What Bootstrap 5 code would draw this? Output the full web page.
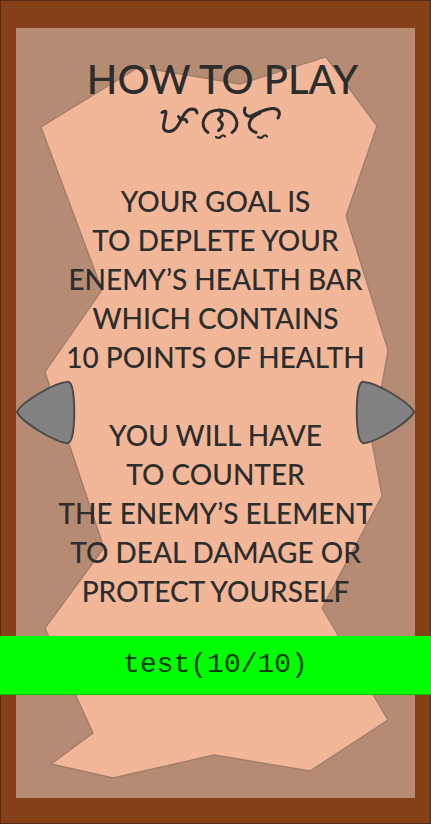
<!DOCTYPE html>
<html lang="en">
<head>
<meta charset="utf-8">
<meta name="viewport" content="width=device-width, initial-scale=1">
<title>How to Play</title>
<link href="https://cdn.jsdelivr.net/npm/bootstrap@5.3.0/dist/css/bootstrap.min.css" rel="stylesheet">
<style>
body { background: #864018; color: #2c2d2d; font-family: Lato, "Open Sans", sans-serif; }
.board { box-shadow: inset 0 0 0 1px #552a0e; padding: 28px 16px 26px; }
.panel { background: #b68b73; }
.parchment { z-index: 0; }
.copy { z-index: 1; padding: 25px 0 24px; }
.title { font-size: 40px; line-height: 52px; font-weight: 500; padding-left: 14px; }
.script-mark { width: 124px; height: 36px; margin-left: 8px; }
.rules { font-size: 28px; line-height: 39px; font-weight: 500; margin-top: 41px; }
.rules p { margin-bottom: 39px; }
.turn { z-index: 2; width: 60px; height: 66px; }
.health { z-index: 3; top: 636px; height: 59px; background: #0f0; border-bottom: 1px solid #00c400; color: #053d05; font-family: "Liberation Mono", monospace; font-size: 28px; line-height: 58px; }
</style>
</head>
<body>
<main class="board position-relative min-vh-100 d-flex">
  <section class="panel position-relative flex-grow-1">
    <svg class="parchment position-absolute top-0 start-0 w-100 h-100" viewBox="16 28 399 770" preserveAspectRatio="none" aria-hidden="true">
      <path d="M41 127 139 67 240 84 326 57 377 126 346 216 388 350 372 442 382 496 322 608 388 720 310 771 214 755 113 778 51 764 93 733 45 628 104 548 45 372 102 290Z" fill="#f2b799" stroke="#a07c69" stroke-width="1.3"/>
    </svg>
    <div class="copy position-relative text-center">
      <h1 class="title mb-0">HOW TO PLAY</h1>
      <svg class="script-mark" viewBox="158 105 124 36" fill="none" stroke="#2c2d2d" stroke-width="3" stroke-linecap="round" stroke-linejoin="round" aria-hidden="true">
        <path d="M162 112.500Q166 110 166 112.500L163.500 126Q163 131.500 169 131.500C181 131 181 109.500 192 109Q196.500 109 197 113"/>
        <path d="M178.500 116.500 180 119 185.500 119.500 187 122"/>
        <path d="M208 132.500C199 127 202 110 220 110S241 127 232 132.500"/>
        <path d="M219.500 110Q222.500 113 222 115.500L218.500 119 222.500 124 221.500 128 218.500 130.500"/>
        <path d="M216 137Q219 139 221 136.500T225 136.500" stroke-width="2.200"/>
        <path d="M245 108C243 114 247 117 251 116 258 113 264 109 272 108.500 279 108 281 113 278 118M260 113C247 118 246 129 256 132.500"/>
        <path d="M258 137Q261 139 263 136.500T267 136.500" stroke-width="2.200"/>
      </svg>
      <div class="rules">
        <p>YOUR GOAL IS<br>TO DEPLETE YOUR<br>ENEMY’S HEALTH BAR<br>WHICH CONTAINS<br>10 POINTS OF HEALTH</p>
        <p class="mb-0">YOU WILL HAVE<br>TO COUNTER<br>THE ENEMY’S ELEMENT<br>TO DEAL DAMAGE OR<br>PROTECT YOURSELF</p>
      </div>
    </div>
    <button class="turn btn p-0 border-0 position-absolute top-50 start-0 translate-middle-y d-flex" type="button" aria-label="Previous page">
      <svg viewBox="0 0 60 66" width="60" height="66" aria-hidden="true"><path d="M1 32C5 23 37 3 51 2Q54 1 56 7C59 19 59 45 56 57Q54 64 50 63C37 61 6 42 1 32Z" fill="#828282" stroke="#4b4b4b" stroke-width="2"/></svg>
    </button>
    <button class="turn btn p-0 border-0 position-absolute top-50 end-0 translate-middle-y d-flex" type="button" aria-label="Next page">
      <svg viewBox="0 0 60 66" width="60" height="66" aria-hidden="true"><path d="M59 32C55 23 23 3 9 2Q6 1 4 7C1 19 1 45 4 57Q6 64 10 63C23 61 54 42 59 32Z" fill="#828282" stroke="#4b4b4b" stroke-width="2"/></svg>
    </button>
  </section>
  <div class="health position-absolute start-0 end-0 text-center" role="status">test(10/10)</div>
</main>
<script src="https://cdn.jsdelivr.net/npm/bootstrap@5.3.0/dist/js/bootstrap.bundle.min.js"></script>
</body>
</html>
